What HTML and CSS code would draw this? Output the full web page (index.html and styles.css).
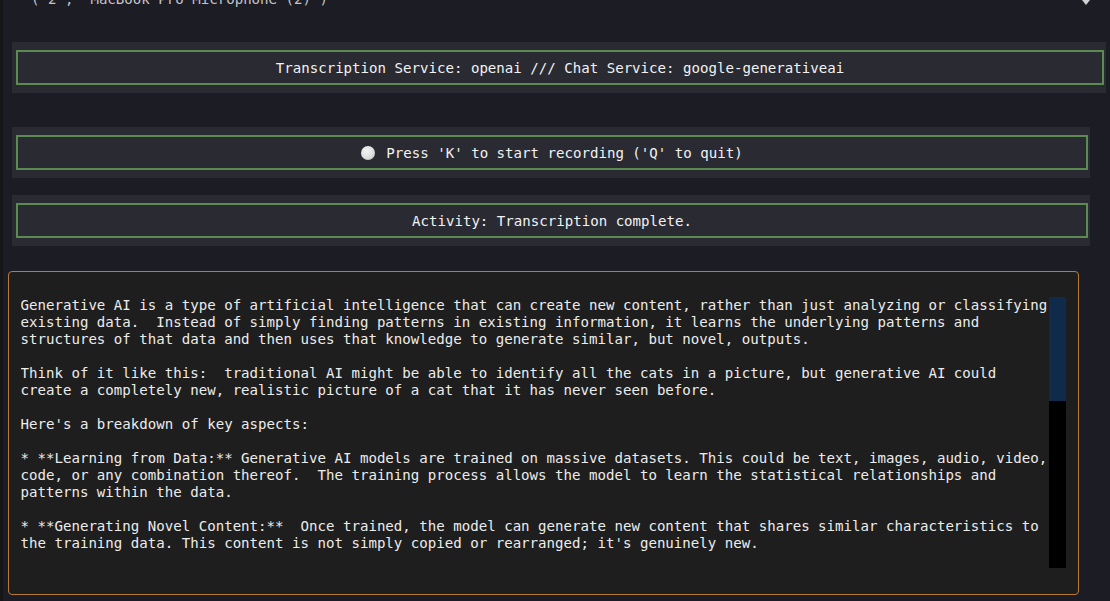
FILE: index.html
```html
<!DOCTYPE html>
<html lang="en">
<head>
<meta charset="utf-8">
<title>Voice Chat</title>
<link rel="stylesheet" href="styles.css">
</head>
<body>
<div class="app">
  <div class="device">
    <span class="device-text">('2', 'MacBook Pro Microphone (2)')</span>
    <span class="caret"></span>
  </div>

  <section class="panel panel-wide">
    <div class="box">Transcription Service: openai /// Chat Service: google-generativeai</div>
  </section>

  <section class="panel panel-narrow gap-lg">
    <div class="box"><span class="dot"></span>Press 'K' to start recording ('Q' to quit)</div>
  </section>

  <section class="panel panel-narrow gap-sm">
    <div class="box">Activity: Transcription complete.</div>
  </section>

  <div class="output">
    <pre class="output-text">Generative AI is a type of artificial intelligence that can create new content, rather than just analyzing or classifying
existing data.  Instead of simply finding patterns in existing information, it learns the underlying patterns and
structures of that data and then uses that knowledge to generate similar, but novel, outputs.

Think of it like this:  traditional AI might be able to identify all the cats in a picture, but generative AI could
create a completely new, realistic picture of a cat that it has never seen before.

Here's a breakdown of key aspects:

* **Learning from Data:** Generative AI models are trained on massive datasets. This could be text, images, audio, video,
code, or any combination thereof.  The training process allows the model to learn the statistical relationships and
patterns within the data.

* **Generating Novel Content:**  Once trained, the model can generate new content that shares similar characteristics to
the training data. This content is not simply copied or rearranged; it's genuinely new.</pre>
    <div class="scrollbar"><div class="thumb"></div></div>
  </div>
</div>
</body>
</html>
```

FILE: styles.css
```css
html, body {
  margin: 0;
  padding: 0;
}

body {
  background: #1c1c24;
  box-shadow: inset 3px 0 0 #161618;
  font-family: "DejaVu Sans Mono", "Liberation Mono", monospace;
  font-size: 14.1px;
  color: #f0f0f0;
  width: 1110px;
  height: 601px;
  overflow: hidden;
}

.app {
  display: flex;
  flex-direction: column;
}

.device {
  height: 42px;
  display: flex;
  justify-content: space-between;
  align-items: flex-start;
  padding: 0 20px 0 31px;
  overflow: hidden;
  box-sizing: border-box;
}

.device-text {
  margin-top: -9px;
  line-height: 17px;
  color: #c4c4c8;
  white-space: pre;
}

.caret {
  width: 0;
  height: 0;
  margin-top: 0;
  border-left: 4px solid transparent;
  border-right: 4px solid transparent;
  border-top: 5px solid #d0d0d4;
}

.panel {
  margin-left: 12px;
  height: 51px;
  padding: 8px 2px 8px 4px;
  box-sizing: border-box;
  background: #2a2a33;
}

.panel-wide {
  width: 1094px;
}

.panel-narrow {
  width: 1078px;
}

.gap-lg {
  margin-top: 34px;
}

.gap-sm {
  margin-top: 17px;
}

.box {
  height: 35px;
  box-sizing: border-box;
  border: 2px solid #5b8b52;
  padding-top: 1px;
  display: flex;
  align-items: center;
  justify-content: center;
  white-space: pre;
  color: #f2f2f2;
  line-height: 17px;
}

.dot {
  width: 14px;
  height: 14px;
  border-radius: 50%;
  background: radial-gradient(circle at 40% 35%, #f4f4f4 0%, #dedede 55%, #b9b9b9 100%);
  margin-right: 11px;
  flex: none;
}

.output {
  margin-top: 25px;
  margin-left: 8px;
  width: 1071px;
  height: 324px;
  box-sizing: border-box;
  border: 1.5px solid #b77b38;
  border-radius: 4px;
  background: #1e1e1e;
  display: flex;
  padding: 25px 11.5px 0 11.5px;
}

.output-text {
  margin: 0;
  width: 1028px;
  flex: none;
  font-family: inherit;
  font-size: 14.1px;
  line-height: 17px;
  color: #ececec;
  white-space: pre;
  overflow: hidden;
}

.scrollbar {
  width: 17px;
  height: 271px;
  flex: none;
  background: #000;
}

.thumb {
  height: 104px;
  background: #0f2a4a;
}
```
